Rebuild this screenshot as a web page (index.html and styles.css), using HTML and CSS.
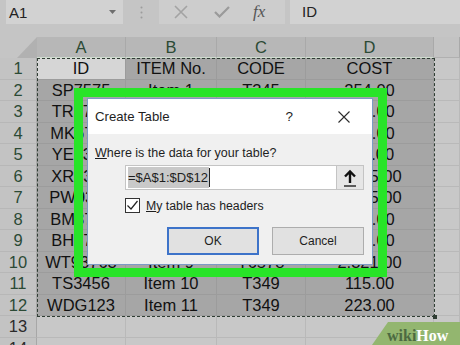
FILE: index.html
```html
<!DOCTYPE html>
<html lang="en">
<head>
  <meta charset="UTF-8">
  <title>Create Table</title>
  <link rel="stylesheet" href="styles.css">
</head>
<body>
  <div class="toolbar">
    <div class="namebox">
      <span>A1</span>
      <svg width="7" height="4" viewBox="0 0 7 4"><path d="M0 0h7L3.5 4z" fill="#6e6e6e"/></svg>
    </div>
    <div class="grip">
      <svg width="3" height="13" viewBox="0 0 3 13"><circle cx="1.5" cy="1.5" r="1" fill="#9c9c9c"/><circle cx="1.5" cy="6.5" r="1" fill="#9c9c9c"/><circle cx="1.5" cy="11.5" r="1" fill="#9c9c9c"/></svg>
    </div>
    <div class="fx-buttons">
      <svg width="16" height="14" viewBox="0 0 16 14"><path d="M2 1l12 12M14 1L2 13" stroke="#a3a3a3" stroke-width="1.6" fill="none"/></svg>
      <svg width="16" height="12" viewBox="0 0 16 12"><path d="M1 6l4.5 4.5L15 1" stroke="#9a9a9a" stroke-width="2.2" fill="none"/></svg>
      <span class="fx">fx</span>
    </div>
    <div class="formula">ID</div>
  </div>

  <div class="sheet">
    <div class="row head">
      <div class="corner"></div>
      <div class="cell colh">A</div>
      <div class="cell colh">B</div>
      <div class="cell colh">C</div>
      <div class="cell colh">D</div>
      <div class="cell colh off"></div>
    </div>
    <div class="row">
      <div class="cell num">1</div>
      <div class="cell active">ID</div>
      <div class="cell sel">ITEM No.</div>
      <div class="cell sel">CODE</div>
      <div class="cell sel">COST</div>
      <div class="cell"></div>
    </div>
    <div class="row">
      <div class="cell num">2</div>
      <div class="cell sel">SP7575</div>
      <div class="cell sel">Item 1</div>
      <div class="cell sel">T345</div>
      <div class="cell sel">254.00</div>
      <div class="cell"></div>
    </div>
    <div class="row">
      <div class="cell num">3</div>
      <div class="cell sel">TR8743</div>
      <div class="cell sel">Item 2</div>
      <div class="cell sel">T456</div>
      <div class="cell sel">135.00</div>
      <div class="cell"></div>
    </div>
    <div class="row">
      <div class="cell num">4</div>
      <div class="cell sel">MK6789</div>
      <div class="cell sel">Item 3</div>
      <div class="cell sel">T567</div>
      <div class="cell sel">178.00</div>
      <div class="cell"></div>
    </div>
    <div class="row">
      <div class="cell num">5</div>
      <div class="cell sel">YE9356</div>
      <div class="cell sel">Item 4</div>
      <div class="cell sel">T678</div>
      <div class="cell sel">110.00</div>
      <div class="cell"></div>
    </div>
    <div class="row">
      <div class="cell num">6</div>
      <div class="cell sel">XR2346</div>
      <div class="cell sel">Item 5</div>
      <div class="cell sel">T789</div>
      <div class="cell sel">1,245.00</div>
      <div class="cell"></div>
    </div>
    <div class="row">
      <div class="cell num">7</div>
      <div class="cell sel">PW9356</div>
      <div class="cell sel">Item 6</div>
      <div class="cell sel">T890</div>
      <div class="cell sel">1,125.00</div>
      <div class="cell"></div>
    </div>
    <div class="row">
      <div class="cell num">8</div>
      <div class="cell sel">BM8765</div>
      <div class="cell sel">Item 7</div>
      <div class="cell sel">T901</div>
      <div class="cell sel">285.00</div>
      <div class="cell"></div>
    </div>
    <div class="row">
      <div class="cell num">9</div>
      <div class="cell sel">BH6754</div>
      <div class="cell sel">Item 8</div>
      <div class="cell sel">T012</div>
      <div class="cell sel">190.00</div>
      <div class="cell"></div>
    </div>
    <div class="row">
      <div class="cell num">10</div>
      <div class="cell sel">WT93763</div>
      <div class="cell sel">Item 9</div>
      <div class="cell sel">T6578</div>
      <div class="cell sel">2,321.00</div>
      <div class="cell"></div>
    </div>
    <div class="row">
      <div class="cell num">11</div>
      <div class="cell sel">TS3456</div>
      <div class="cell sel">Item 10</div>
      <div class="cell sel">T349</div>
      <div class="cell sel">115.00</div>
      <div class="cell"></div>
    </div>
    <div class="row">
      <div class="cell num">12</div>
      <div class="cell sel">WDG123</div>
      <div class="cell sel">Item 11</div>
      <div class="cell sel">T349</div>
      <div class="cell sel">223.00</div>
      <div class="cell"></div>
    </div>
    <div class="row">
      <div class="cell num plain">13</div>
      <div class="cell"></div>
      <div class="cell"></div>
      <div class="cell"></div>
      <div class="cell"></div>
      <div class="cell"></div>
    </div>
    <div class="row">
      <div class="cell num plain">14</div>
      <div class="cell"></div>
      <div class="cell"></div>
      <div class="cell"></div>
      <div class="cell"></div>
      <div class="cell"></div>
    </div>
  </div>

  <!-- marching ants round A1:D12 -->
  <div class="marquee"></div>

  <div class="highlight"></div>

  <div class="dialog">
    <div class="dialog-title">
      <span class="title-text">Create Table</span>
      <span class="help">?</span>
      <svg class="close" width="12" height="12" viewBox="0 0 12 12"><path d="M0.5 0.5l11 11M11.5 0.5l-11 11" stroke="#2b2b2b" stroke-width="1.1" fill="none"/></svg>
    </div>
    <div class="dialog-body">
      <div class="label"><u>W</u>here is the data for your table?</div>
      <div class="range">
        <div class="range-input"><span class="picked">=$A$1:$D$12</span><span class="caret-line"></span></div>
        <div class="range-btn">
          <svg width="14" height="18" viewBox="0 0 14 18"><path d="M7 14V2.5M2 7.5L7 2.5l5 5" stroke="#111" stroke-width="2.4" fill="none"/><path d="M1 17h12" stroke="#111" stroke-width="1.3"/></svg>
        </div>
      </div>
      <label class="check">
        <span class="box"><svg width="15" height="15" viewBox="0 0 15 15"><path d="M2.5 7.5l3.5 3.5 6.5-8" stroke="#222" stroke-width="1.2" fill="none"/></svg></span>
        <span><u>M</u>y table has headers</span>
      </label>
      <div class="actions">
        <button class="btn primary">OK</button>
        <button class="btn">Cancel</button>
      </div>
    </div>
  </div>

  <div class="wikihow"><span class="wiki">wiki</span>How</div>
</body>
</html>
```

FILE: styles.css
```css
:root {
  --bg: #c5c5c5;
  --cell: #c8c8c8;
  --grid: #b9b9b9;
  --sel: #a6a6a6;
  --sel-grid: #9c9c9c;
  --head-text: #2b4a35;
  --green: #28e428;
}
body {
  margin: 0;
  width: 460px;
  height: 345px;
  overflow: hidden;
  position: relative;
  background: var(--bg);
  font-family: 'Liberation Sans', Arial, sans-serif;
  color: #111;
}
.toolbar {
  display: flex;
  height: 24px;
}
.namebox {
  margin-left: 6px;
  width: 117px;
  box-sizing: border-box;
  padding: 0 7px 0 3px;
  background: #d2d2d2;
  display: flex;
  align-items: center;
  justify-content: space-between;
  font-size: 15px;
  color: #222;
}
.grip {
  width: 36px;
  display: flex;
  align-items: center;
  justify-content: center;
}
.fx-buttons {
  width: 126px;
  background: #cdcdcd;
  display: flex;
  align-items: center;
  padding-left: 14px;
  gap: 25px;
  box-sizing: border-box;
}
.fx {
  font-family: 'Liberation Serif', serif;
  font-style: italic;
  font-size: 17px;
  color: #555;
  margin-left: -2px;
}
.formula {
  margin-left: 5px;
  flex: 1;
  background: #d2d2d2;
  padding-left: 12px;
  font-size: 15px;
  line-height: 24px;
  color: #222;
}
.sheet {
  margin-top: 13px;
}
.row {
  display: grid;
  grid-template-columns: 37px 89px 91px 89px 128px 1fr;
  height: 21.5px;
}
.row.head {
  height: 21px;
}
.cell {
  box-sizing: border-box;
  background: var(--cell);
  border-right: 1px solid var(--grid);
  border-bottom: 1px solid var(--grid);
  text-align: center;
  font-size: 16.5px;
  line-height: 21px;
  white-space: nowrap;
  overflow: hidden;
}
.corner {
  background: #b1b1b1;
  clip-path: polygon(17px 100%, 100% 100%, 100% 0);
}
.colh {
  background: #b7b7b7;
  color: var(--head-text);
  border-right-color: #a9a9a9;
  border-bottom: 1px solid #cfdccf;
}
.colh.off {
  background: #c3c3c3;
  border-bottom-color: #b0b0b0;
}
.num {
  background: #c3c3c3;
  color: var(--head-text);
  border-right-color: #a7a7a7;
  border-bottom-color: #b7b7b7;
}
.num.plain {
  color: #2a2a2a;
}
.sel {
  background: var(--sel);
  border-color: var(--sel-grid);
}
.active {
  background: #d6d6d6;
  border-color: var(--sel-grid);
}
.marquee {
  position: absolute;
  left: 37px;
  top: 58px;
  width: 398px;
  height: 259px;
  border: 1px dashed #2f3d33;
  box-sizing: border-box;
}
.marquee::after {
  content: '';
  position: absolute;
  right: -3px;
  bottom: -3px;
  width: 4px;
  height: 4px;
  background: #2f3d33;
}
.highlight {
  position: absolute;
  left: 74px;
  top: 88px;
  width: 313px;
  height: 189px;
  border: 9px solid var(--green);
  box-sizing: border-box;
}
.dialog {
  position: absolute;
  left: 87px;
  top: 98px;
  width: 286px;
  height: 167px;
  box-sizing: border-box;
  border: 1px solid #7c9bc6;
  background: #f0f0f0;
  font-family: 'Liberation Sans', Arial, sans-serif;
  color: #1e1e1e;
}
.dialog-title {
  height: 35px;
  background: #fff;
  display: flex;
  align-items: center;
  padding-left: 7px;
}
.title-text {
  font-size: 13.2px;
  flex: 1;
}
.help {
  font-size: 13.5px;
  margin-right: 45px;
}
.close {
  margin-right: 22px;
}
.dialog-body {
  padding: 11px 8px 0 7px;
}
.label {
  font-size: 12.5px;
  line-height: 17px;
}
.range {
  margin: 3px 0 0 30px;
  height: 25px;
  display: flex;
  border: 1px solid #c4c4c4;
  box-sizing: border-box;
}
.range-input {
  flex: 1;
  background: #fff;
  display: flex;
  align-items: center;
  padding-left: 2px;
}
.picked {
  background: #c9c9c9;
  font-size: 13px;
  line-height: 21px;
  padding-right: 1px;
}
.caret-line {
  width: 1px;
  height: 19px;
  background: #222;
}
.range-btn {
  width: 26px;
  background: #e6e6e6;
  border-left: 1px solid #c4c4c4;
  display: flex;
  align-items: center;
  justify-content: center;
}
.check {
  margin: 8px 0 0 30px;
  display: flex;
  align-items: center;
  gap: 6px;
  font-size: 12.3px;
  height: 15px;
}
.box {
  width: 15px;
  height: 15px;
  box-sizing: border-box;
  border: 1px solid #333;
  background: #fff;
  display: flex;
}
.box svg {
  margin: -1px;
}
.actions {
  margin-top: 14px;
  display: flex;
  justify-content: flex-end;
  gap: 13px;
}
.btn {
  width: 92px;
  height: 28px;
  box-sizing: border-box;
  background: #e1e1e1;
  border: 1px solid #adadad;
  font-family: 'Liberation Sans', Arial, sans-serif;
  font-size: 12px;
  color: #1e1e1e;
  padding: 0;
}
.btn.primary {
  border: 2px solid #3d73c9;
}
.wikihow {
  position: absolute;
  right: 0;
  bottom: 0;
  width: 88px;
  height: 23px;
  box-sizing: border-box;
  padding-left: 15px;
  background: #93b66f;
  clip-path: polygon(16px 0, 100% 0, 100% 100%, 0 100%);
  font-family: 'Liberation Serif', serif;
  font-weight: bold;
  font-size: 16px;
  line-height: 28px;
  color: #fff;
}
.wiki {
  color: #4c6a41;
}
```
